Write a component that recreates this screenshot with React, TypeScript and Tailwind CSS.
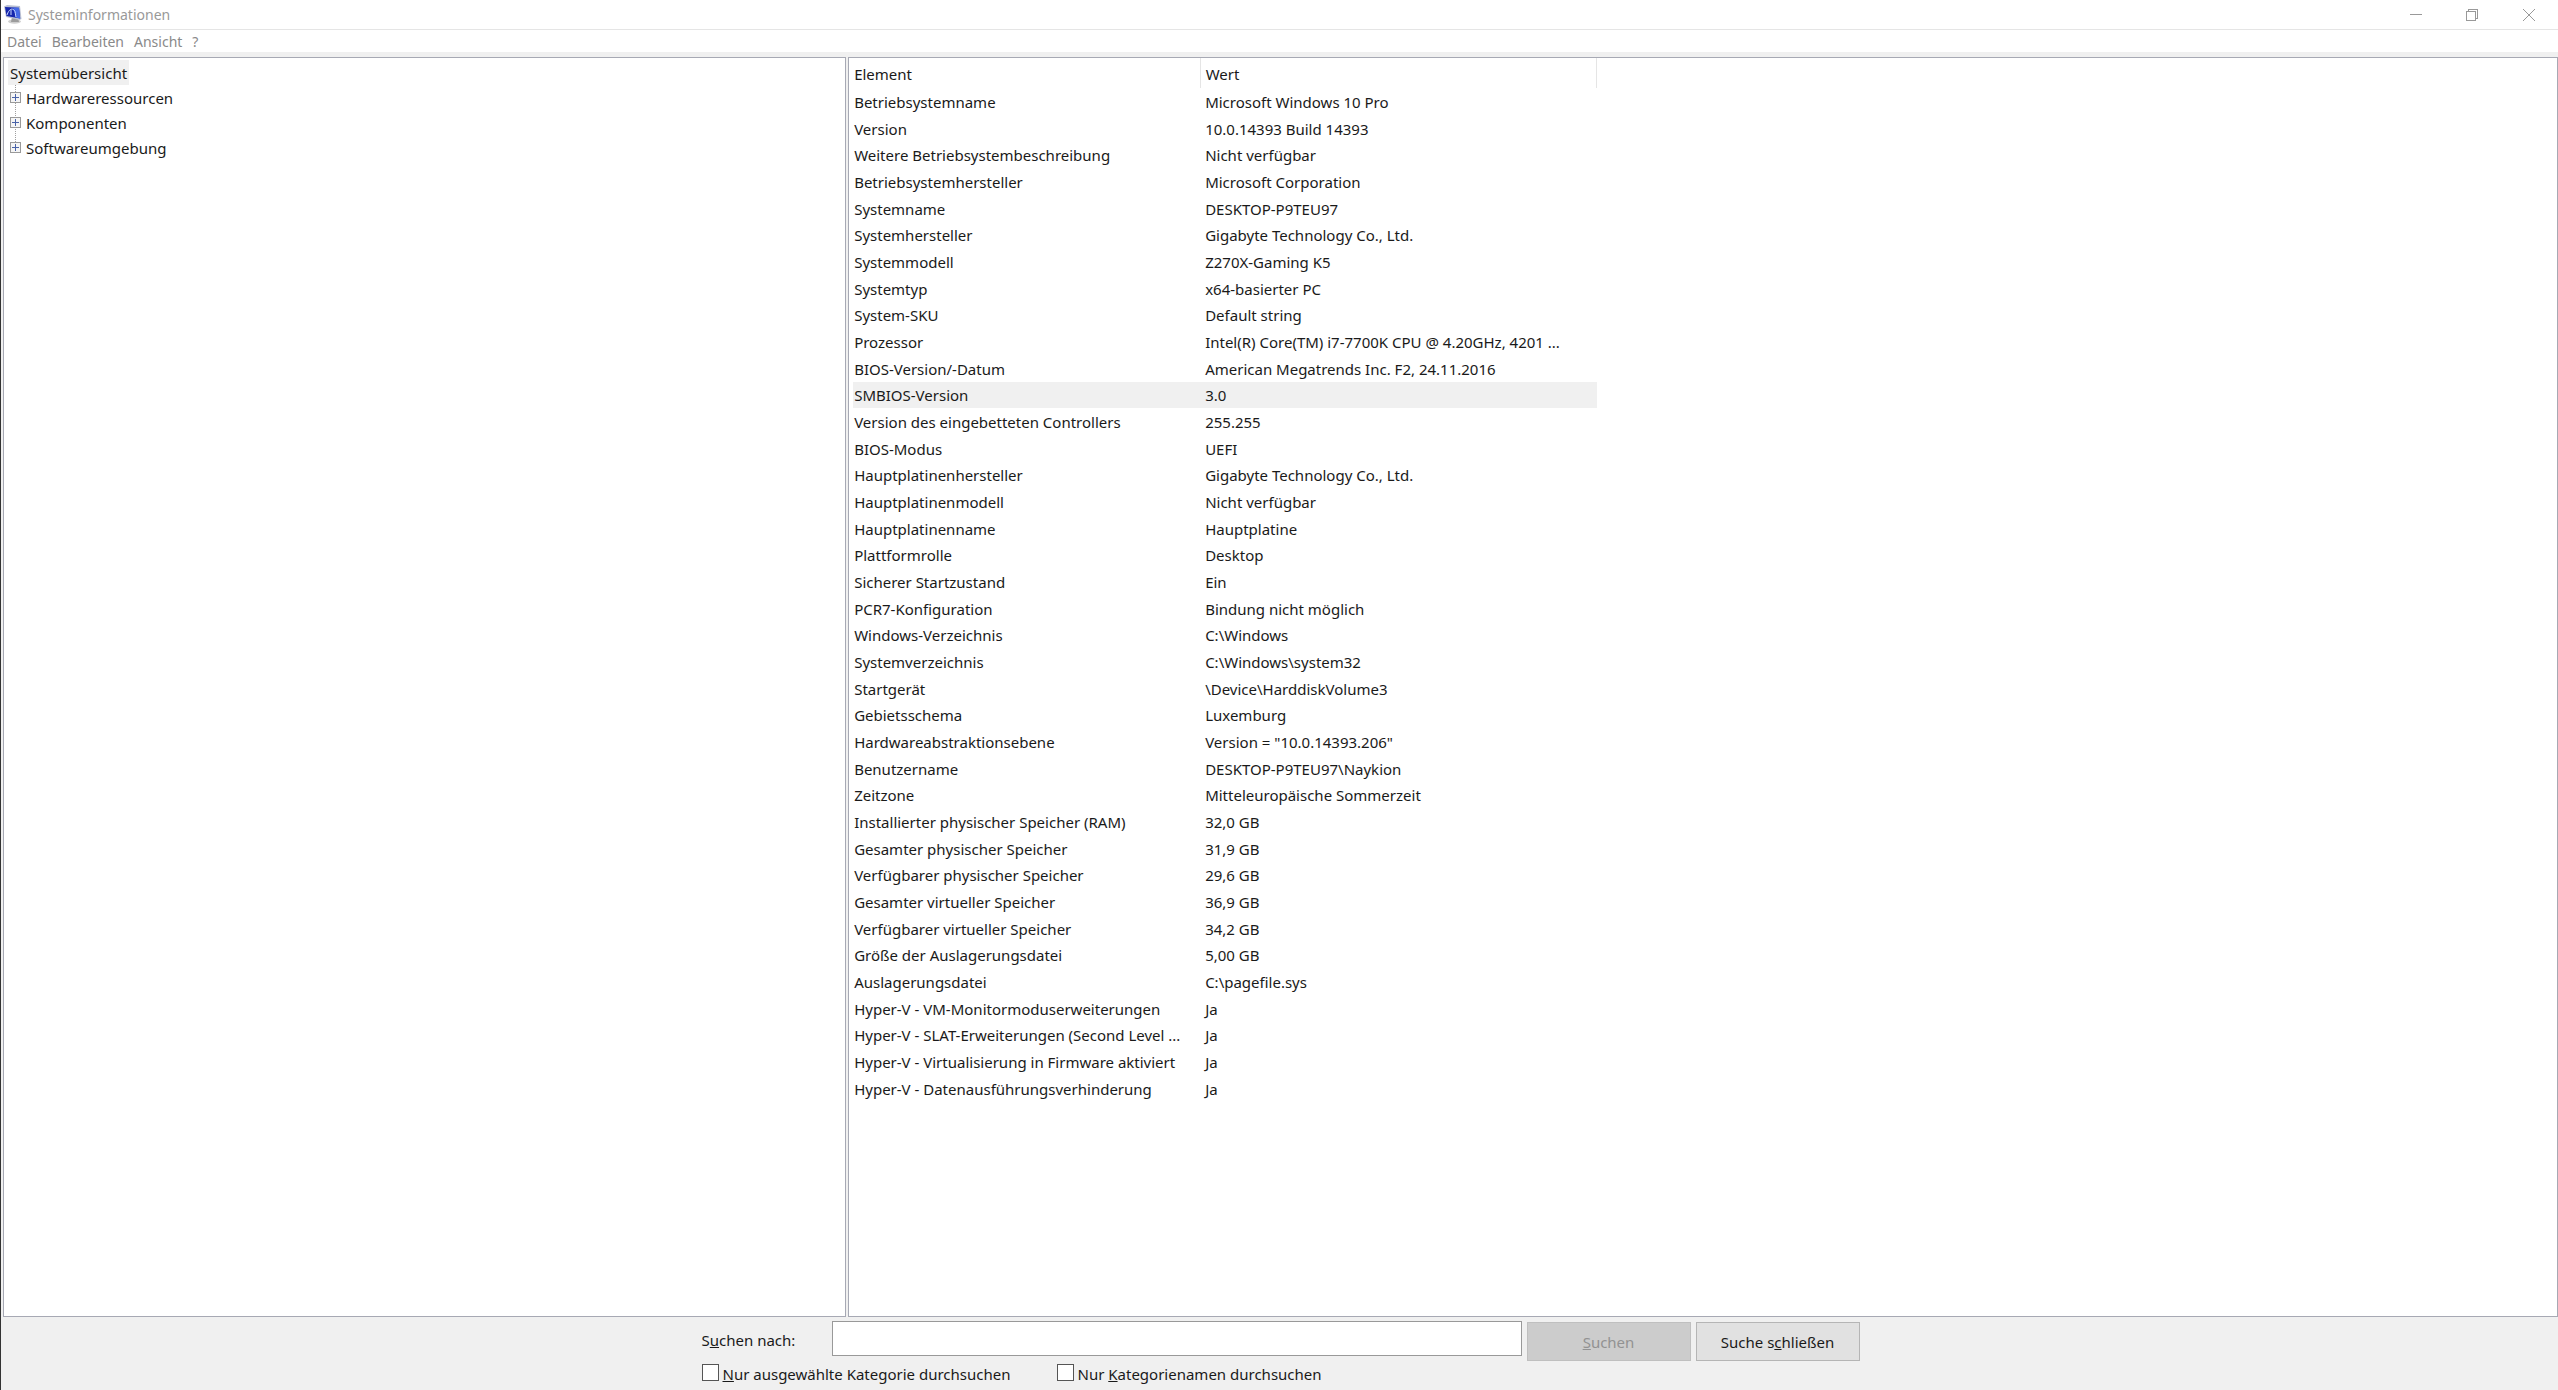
const rows: [string, string][] = [
  ["Betriebsystemname", "Microsoft Windows 10 Pro"],
  ["Version", "10.0.14393 Build 14393"],
  ["Weitere Betriebsystembeschreibung", "Nicht verfügbar"],
  ["Betriebsystemhersteller", "Microsoft Corporation"],
  ["Systemname", "DESKTOP-P9TEU97"],
  ["Systemhersteller", "Gigabyte Technology Co., Ltd."],
  ["Systemmodell", "Z270X-Gaming K5"],
  ["Systemtyp", "x64-basierter PC"],
  ["System-SKU", "Default string"],
  ["Prozessor", "Intel(R) Core(TM) i7-7700K CPU @ 4.20GHz, 4201 ..."],
  ["BIOS-Version/-Datum", "American Megatrends Inc. F2, 24.11.2016"],
  ["SMBIOS-Version", "3.0"],
  ["Version des eingebetteten Controllers", "255.255"],
  ["BIOS-Modus", "UEFI"],
  ["Hauptplatinenhersteller", "Gigabyte Technology Co., Ltd."],
  ["Hauptplatinenmodell", "Nicht verfügbar"],
  ["Hauptplatinenname", "Hauptplatine"],
  ["Plattformrolle", "Desktop"],
  ["Sicherer Startzustand", "Ein"],
  ["PCR7-Konfiguration", "Bindung nicht möglich"],
  ["Windows-Verzeichnis", "C:\\Windows"],
  ["Systemverzeichnis", "C:\\Windows\\system32"],
  ["Startgerät", "\\Device\\HarddiskVolume3"],
  ["Gebietsschema", "Luxemburg"],
  ["Hardwareabstraktionsebene", 'Version = "10.0.14393.206"'],
  ["Benutzername", "DESKTOP-P9TEU97\\Naykion"],
  ["Zeitzone", "Mitteleuropäische Sommerzeit"],
  ["Installierter physischer Speicher (RAM)", "32,0 GB"],
  ["Gesamter physischer Speicher", "31,9 GB"],
  ["Verfügbarer physischer Speicher", "29,6 GB"],
  ["Gesamter virtueller Speicher", "36,9 GB"],
  ["Verfügbarer virtueller Speicher", "34,2 GB"],
  ["Größe der Auslagerungsdatei", "5,00 GB"],
  ["Auslagerungsdatei", "C:\\pagefile.sys"],
  ["Hyper-V - VM-Monitormoduserweiterungen", "Ja"],
  ["Hyper-V - SLAT-Erweiterungen (Second Level ...", "Ja"],
  ["Hyper-V - Virtualisierung in Firmware aktiviert", "Ja"],
  ["Hyper-V - Datenausführungsverhinderung", "Ja"],
];

const categories = ["Hardwareressourcen", "Komponenten", "Softwareumgebung"];

function AppIcon() {
  return (
    <svg width="18" height="19" viewBox="0 0 18 19" aria-hidden="true">
      <ellipse cx="10.5" cy="16.5" rx="6.5" ry="2.2" fill="#cfcfcf" />
      <path d="M8 12l6 1 1 4H7z" fill="#9c9c9c" />
      <path d="M0 1.500L3 0l13 1 1.500 13-2 1L2 12z" fill="#b9bfd2" />
      <path d="M1 2l14 .8 1.200 10.700L2.500 11z" fill="#1526ad" />
      <path d="M9 2.500l6 .3 1.200 10.700-4-.7z" fill="#4569e6" />
      <path d="M3 10C5 4 8 3 10 5s1 4.500 2 7M7 4.500v5.500" stroke="#c8d6ff" fill="none" />
    </svg>
  );
}

function TitleBar() {
  return (
    <header className="flex h-[30px] items-center border-b border-[#e5e5e5] bg-white pl-[3px]">
      <AppIcon />
      <h1 className="ml-[6px] flex-1 text-sm leading-5 text-[#999]">Systeminformationen</h1>
      <div className="flex text-[#999]">
        <button aria-label="Minimieren" className="flex h-7 w-14 items-center justify-center">
          <svg width="12" height="12" viewBox="0 0 12 12" shapeRendering="crispEdges">
            <path d="M0 5.500h12" stroke="currentColor" />
          </svg>
        </button>
        <button aria-label="Wiederherstellen" className="flex h-7 w-14 items-center justify-center">
          <svg width="12" height="12" viewBox="0 0 12 12" fill="none" shapeRendering="crispEdges">
            <path d="M.5 2.500h9v9h-9zM2.500 2.500v-2h9v9h-2" stroke="currentColor" />
          </svg>
        </button>
        <button aria-label="Schließen" className="flex h-7 w-[58px] items-center justify-center">
          <svg width="12" height="12" viewBox="0 0 12 12">
            <path d="M0 0l12 12M12 0L0 12" stroke="currentColor" />
          </svg>
        </button>
      </div>
    </header>
  );
}

function MenuBar() {
  return (
    <nav className="flex h-[22px] items-center gap-[10px] bg-white pt-[2px] pl-[6px] text-sm leading-5 text-[#8a8a8a]">
      <button>Datei</button>
      <button>Bearbeiten</button>
      <button>Ansicht</button>
      <button>?</button>
    </nav>
  );
}

function CategoryTree() {
  return (
    <aside className="w-[33%] border border-[#a7a9b4] bg-white pt-[2px] pl-1">
      <button className="block h-[25px] bg-[#f0f0f0] px-[2px]">Systemübersicht</button>
      <ul className="ml-[7px] h-[63px] border-l border-dotted border-[#a0a0a0]">
        {categories.map((name) => (
          <li key={name} className="-ml-[6px] flex h-[25px] items-center">
            <button aria-label={`${name} erweitern`} className="bg-white">
              <svg width="11" height="11" viewBox="0 0 11 11" shapeRendering="crispEdges">
                <rect x=".5" y=".5" width="10" height="10" fill="#f5f5f5" stroke="#9a9a9a" />
                <path d="M2 5.500h7M5.500 2v7" stroke="#4a63a8" />
              </svg>
            </button>
            <button className="ml-[5px]">{name}</button>
          </li>
        ))}
      </ul>
    </aside>
  );
}

function DetailsTable() {
  return (
    <main className="flex-1 border border-[#a7a9b4] bg-white pl-1">
      <table className="w-[744px] table-fixed border-collapse text-left whitespace-nowrap">
        <thead>
          <tr className="h-[30px]">
            <th className="w-[347px] border-r border-[#e5e5e5] p-0 pt-px pl-px font-normal">Element</th>
            <th className="border-r border-[#e5e5e5] p-0 pt-px pl-[5px] font-normal">Wert</th>
          </tr>
        </thead>
        <tbody>
          {rows.map(([name, value]) => (
            <tr
              key={name}
              className={`h-[27px] nth-[3n]:h-[26px] ${name === "SMBIOS-Version" ? "bg-[#f0f0f0]" : ""}`}
            >
              <td className="p-0 pl-px">{name}</td>
              <td className="p-0 pl-[5px]">{value}</td>
            </tr>
          ))}
        </tbody>
      </table>
    </main>
  );
}

function SearchBar() {
  return (
    <form className="mx-auto h-[73px] w-full max-w-[1164px] pt-1 pr-[2px] pl-1">
      <div className="flex items-start">
        <label htmlFor="search" className="w-[130px] pt-[9px]">
          S<u>u</u>chen nach:
        </label>
        <input id="search" type="text" className="h-[35px] flex-1 border border-[#999] bg-white px-2 outline-none" />
        <button
          type="button"
          disabled
          className="mt-px ml-[5px] h-[39px] w-[164px] border border-[#bfbfbf] bg-[#ccc] text-[#929292]"
        >
          <u>S</u>uchen
        </button>
        <button type="button" className="mt-px ml-[5px] h-[39px] w-[164px] border border-[#b5b5b5] bg-[#e1e1e1]">
          Suche s<u>c</u>hließen
        </button>
      </div>
      <div className="flex pt-[3px]">
        <label className="flex w-[355px] items-start gap-1">
          <input type="checkbox" className="size-[17px] appearance-none border border-[#555] bg-white" />
          <span>
            <u>N</u>ur ausgewählte Kategorie durchsuchen
          </span>
        </label>
        <label className="flex items-start gap-1">
          <input type="checkbox" className="size-[17px] appearance-none border border-[#555] bg-white" />
          <span>
            Nur <u>K</u>ategorienamen durchsuchen
          </span>
        </label>
      </div>
    </form>
  );
}

export default function App() {
  return (
    <div className="flex min-h-screen flex-col border-l border-[#333] bg-[#f0f0f0] font-['Noto_Sans',sans-serif] text-[15px] leading-5 text-[#1a1a1a]">
      <TitleBar />
      <MenuBar />
      <div className="flex flex-1 gap-[2px] pt-[5px] pl-[2px]">
        <CategoryTree />
        <DetailsTable />
      </div>
      <SearchBar />
    </div>
  );
}
